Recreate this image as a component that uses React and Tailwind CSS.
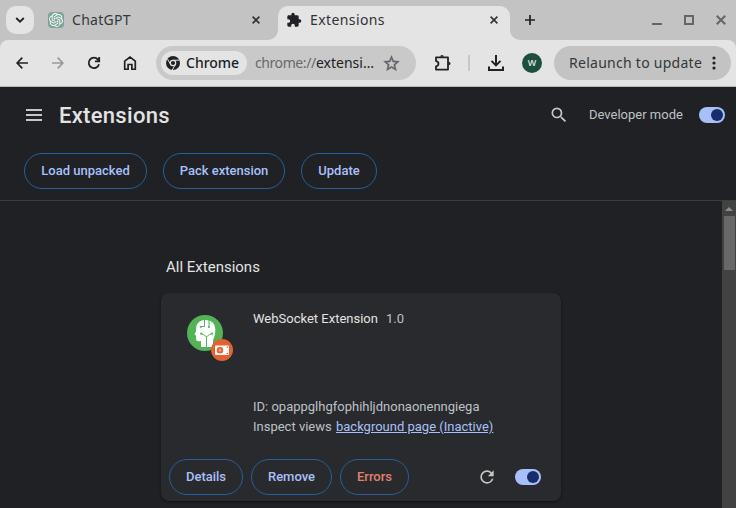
import React from "react";

function Label({ children, className }) {
  return (
    <span className={`block shrink-0 whitespace-nowrap font-['Noto_Sans','Open_Sans',sans-serif] text-[14px] leading-6 ${className}`}>
      {children}
    </span>
  );
}

function Cross({ className }) {
  return (
    <svg viewBox="0 0 8 8" className={className}>
      <path d="M0.6 0.6 7.4 7.4M7.4 0.6 0.6 7.4" stroke="currentColor" strokeWidth="1.6" fill="none" />
    </svg>
  );
}

function OpenAiMark() {
  return (
    <svg viewBox="0 0 24 24" className="h-3.5 w-3.5 text-white" fill="currentColor">
      <path d="M22.28 9.82a5.98 5.98 0 0 0-.52-4.91 6.05 6.05 0 0 0-6.51-2.9A6.07 6.07 0 0 0 4.98 4.18a5.98 5.98 0 0 0-4 2.9 6.05 6.05 0 0 0 .74 7.1 5.98 5.98 0 0 0 .51 4.91 6.05 6.05 0 0 0 6.51 2.9A5.98 5.98 0 0 0 13.26 24a6.06 6.06 0 0 0 5.77-4.21 5.99 5.99 0 0 0 4-2.9 6.06 6.06 0 0 0-.75-7.07zm-9.02 12.61a4.48 4.48 0 0 1-2.88-1.04l.14-.08 4.78-2.76a.8.8 0 0 0 .39-.68v-6.74l2.02 1.17a.07.07 0 0 1 .04.05v5.58a4.5 4.5 0 0 1-4.49 4.5zM3.6 18.3a4.47 4.47 0 0 1-.54-3.01l.14.08 4.78 2.76a.77.77 0 0 0 .78 0l5.84-3.37v2.33a.08.08 0 0 1-.03.06L9.74 19.95a4.5 4.5 0 0 1-6.14-1.65zM2.34 7.9a4.49 4.49 0 0 1 2.37-1.98V11.6a.77.77 0 0 0 .39.68l5.81 3.35-2.02 1.17a.08.08 0 0 1-.07 0l-4.83-2.79A4.5 4.5 0 0 1 2.34 7.87zm16.6 3.85-5.84-3.38L15.12 7.2a.08.08 0 0 1 .07 0l4.83 2.79a4.49 4.49 0 0 1-.68 8.1v-5.67a.79.79 0 0 0-.4-.67zm2.01-3.02-.14-.09-4.77-2.78a.78.78 0 0 0-.79 0L9.41 9.23V6.9a.07.07 0 0 1 .03-.06l4.83-2.79a4.5 4.5 0 0 1 6.68 4.66zM8.31 12.86l-2.02-1.16a.08.08 0 0 1-.04-.06V6.07a4.5 4.5 0 0 1 7.38-3.45l-.14.08-4.78 2.76a.8.8 0 0 0-.39.68zm1.1-2.36 2.6-1.5 2.6 1.5v3l-2.6 1.5-2.6-1.5z" />
    </svg>
  );
}

function TabStrip() {
  return (
    <div className="flex h-10 bg-[#c3c3c3]">
      <div className="ml-1.5 mt-1.5 flex h-7 w-7 items-center justify-center rounded-[10px] bg-[#e4e4e4]">
        <svg viewBox="0 0 10 6" className="h-1.5 w-2.5 text-[#202124]">
          <path d="M1.2 1 5 4.7 8.8 1" stroke="currentColor" strokeWidth="1.8" fill="none" />
        </svg>
      </div>
      <div className="ml-3.5 flex h-10 w-[220px] items-center">
        <span className="flex h-4 w-4 items-center justify-center rounded-sm bg-[#7ba696]">
          <OpenAiMark />
        </span>
        <Label className="ml-2 w-[59px] tracking-[0.3px] text-[#35373a]">ChatGPT</Label>
        <Cross className="ml-[121px] h-2 w-2 text-[#303236]" />
      </div>
      <svg viewBox="0 0 10 10" className="h-2.5 w-2.5 self-end text-[#e4e4e4]">
        <path d="M10 0v10H0A10 10 0 0 0 10 0z" fill="currentColor" />
      </svg>
      <div className="mt-1.5 flex h-[34px] w-[232px] items-center rounded-t-[10px] bg-[#e4e4e4] pb-1.5">
        <svg viewBox="0 0 24 24" className="ml-2 h-4 w-4 text-[#202124]" fill="currentColor">
          <path d="M20.5 11H19V7c0-1.1-.9-2-2-2h-4V3.5a2.5 2.5 0 0 0-5 0V5H4c-1.1 0-1.99.9-1.99 2v3.8H3.5c1.49 0 2.7 1.21 2.7 2.7s-1.21 2.7-2.7 2.7H2V20c0 1.1.9 2 2 2h3.8v-1.5c0-1.49 1.21-2.7 2.7-2.7s2.7 1.21 2.7 2.7V22H17c1.1 0 2-.9 2-2v-4h1.5a2.5 2.5 0 0 0 0-5z" />
        </svg>
        <Label className="ml-2 w-[75px] tracking-[0.4px] text-[#303236]">Extensions</Label>
        <Cross className="ml-[105px] h-2 w-2 text-[#303236]" />
      </div>
      <svg viewBox="0 0 10 10" className="h-2.5 w-2.5 self-end text-[#e4e4e4]">
        <path d="M0 0v10h10A10 10 0 0 1 0 0z" fill="currentColor" />
      </svg>
      <svg viewBox="0 0 10 10" className="ml-[5px] mt-[15px] h-2.5 w-2.5 text-[#202124]">
        <path d="M5 0v10M0 5h10" stroke="currentColor" strokeWidth="1.7" />
      </svg>
      <div className="ml-auto flex h-10 items-center gap-[22px] pr-[10px] text-[#63666a]">
        <span className="mt-[7px] h-0.5 w-2.5 bg-current" />
        <span className="h-2.5 w-2.5 border-2 border-current" />
        <Cross className="h-2.5 w-2.5" />
      </div>
    </div>
  );
}

function ChromeMark() {
  return (
    <svg viewBox="0 0 14 14" className="h-3.5 w-3.5 shrink-0">
      <circle cx="7" cy="7" r="7" fill="#202124" />
      <circle cx="7" cy="7" r="2.7" fill="none" stroke="#e4e4e4" strokeWidth="1.2" />
      <path d="M7 4.2H13.4M4.6 8.4 1.4 2.9M9.4 8.4 6.3 14" stroke="#e4e4e4" strokeWidth="1" />
    </svg>
  );
}

function Toolbar() {
  return (
    <div className="bg-[#c3c3c3]">
      <div className="flex h-[46px] items-center rounded-t-lg bg-[#e4e4e4] text-[#202124]">
        <svg viewBox="0 0 12 12" className="ml-4 h-3 w-3" fill="none" stroke="currentColor" strokeWidth="1.7">
          <path d="M12 6H1.3M6.3.7 1.1 6l5.2 5.3" />
        </svg>
        <svg viewBox="0 0 12 12" className="ml-6 h-3 w-3 text-[#999]" fill="none" stroke="currentColor" strokeWidth="1.7">
          <path d="M0 6h10.7M5.7.7 10.9 6l-5.2 5.3" />
        </svg>
        <svg viewBox="0 0 14 14" className="ml-[23px] h-3.5 w-3.5" fill="none" stroke="currentColor" strokeWidth="1.8">
          <path d="M12 8.2A5.2 5.2 0 1 1 11 3.6L12 4.8M12.2 1v4.3H8" />
        </svg>
        <svg viewBox="0 0 14 14" className="ml-[22px] h-3.5 w-3.5" fill="none" stroke="currentColor" strokeWidth="1.7">
          <path d="M1.7 5.2 7 1.1l5.300 4.100v8.100H8.900V8.500H5.100v4.800H1.700z" />
        </svg>
        <div className="ml-[19px] flex h-[34px] w-[260px] items-center rounded-full bg-[#c9c9c9] pl-[5px]">
          <div className="flex h-6 w-[86px] items-center rounded-full bg-[#e4e4e4] pl-[5px]">
            <ChromeMark />
            <Label className="ml-1.5 font-medium text-[#202124]">Chrome</Label>
          </div>
          <Label className="ml-2 flex w-[120px] text-[#202124]">
            <span className="inline-block w-[61px] tracking-[-0.42px] text-[#66696d]">chrome://</span>
            <span>extensi…</span>
          </Label>
          <svg viewBox="0 0 24 24" className="ml-[7px] h-[19px] w-[19px] shrink-0 text-[#5f6368]" fill="currentColor" stroke="currentColor" strokeWidth="0.5">
            <path d="m22 9.240-7.190-.620L12 2 9.190 8.630 2 9.240l5.460 4.730L5.820 21 12 17.270 18.180 21l-1.630-7.030L22 9.240zM12 15.400l-3.760 2.270 1-4.280-3.320-2.880 4.380-.380L12 6.100l1.710 4.040 4.380.380-3.320 2.880 1 4.280L12 15.400z" />
          </svg>
        </div>
        <svg viewBox="0 0 18 18" className="ml-[17px] h-[18px] w-[18px]">
          <path d="M3 3.400h12v12.200H3v-3.300c3.300-.500 3.300-4.700 0-5.200z" fill="none" stroke="currentColor" strokeWidth="1.800" strokeLinejoin="round" />
          <path d="M7.200 2.800a1.800 1.800 0 0 1 3.600 0zM15.700 7.700a1.800 1.800 0 0 1 0 3.600z" fill="currentColor" />
        </svg>
        <span className="ml-[17px] h-4 w-0.5 bg-[#c7c7c7]" />
        <svg viewBox="0 0 16 16" className="ml-[18px] h-4 w-4" fill="none" stroke="currentColor" strokeWidth="2">
          <path d="M8 0v10M3.500 5.900 8 10.400l4.500-4.500M1 11.500V15h14v-3.500" />
        </svg>
        <span className="ml-[18px] flex h-5 w-5 items-center justify-center rounded-full bg-[#1c4f40] font-['Open_Sans',sans-serif] text-[9px] font-semibold text-[#e4e4e4]">W</span>
        <div className="ml-3 flex h-[34px] w-[177px] items-center rounded-full bg-[#c3c3c3] pl-[15px]">
          <Label className="w-[133px] tracking-[0.27px] text-[#35373a]">Relaunch to update</Label>
          <svg viewBox="0 0 4 14" className="ml-[10px] h-3.5 w-1" fill="#202124">
            <circle cx="2" cy="2" r="1.600" />
            <circle cx="2" cy="7" r="1.600" />
            <circle cx="2" cy="12" r="1.600" />
          </svg>
        </div>
      </div>
      <div className="h-px bg-[#b8b9b9]" />
    </div>
  );
}

function Toggle({ className = "" }) {
  return (
    <span className={`flex h-4 w-[26px] shrink-0 items-center justify-end rounded-full bg-[#a8c0fa] pr-0.5 ${className}`}>
      <span className="h-3 w-3 rounded-full bg-[#172c6c]" />
    </span>
  );
}

function Pill({ children, className }) {
  return (
    <button className={`flex h-9 shrink-0 items-center justify-center rounded-full border border-[#285f9c] text-[13px] font-medium ${className}`}>
      {children}
    </button>
  );
}

function ExtensionIcon() {
  return (
    <svg viewBox="0 0 46 46" className="h-[46px] w-[46px] shrink-0">
      <circle cx="18" cy="18" r="18" fill="#53b356" />
      <path d="M18.500 5C13 5 9.200 8.300 9.200 13.200c0 1.800-.300 3-.900 4.500l-.700 1.900 1.500.800v3.500c0 1.800.900 2.400 2.600 2.300l2.300-.100V32h12v-7.300c1.600-2.200 2.300-5.500 2.300-10C28.300 8.600 24.500 5 18.500 5z" fill="#fff" />
      <path d="M19.500 32V21.500M14.500 19l2 .5 3 2.300 3-2.300 2-.5M17.500 5v6.500h-3M22 5v6.500" fill="none" stroke="#53b356" strokeWidth="1" />
      <g fill="#53b356">
        <circle cx="13.800" cy="11.800" r="1.100" />
        <circle cx="22" cy="12" r="1.100" />
        <circle cx="14.200" cy="18.700" r="1.100" />
        <circle cx="25" cy="18.700" r="1.100" />
      </g>
      <circle cx="35" cy="35" r="11" fill="#e3622f" />
      <rect x="28" y="30.500" width="14" height="9.500" rx="1" fill="#fff" />
      <circle cx="33" cy="35.200" r="2.300" fill="#f3b79f" stroke="#e3622f" strokeWidth="2" />
      <g fill="#e3622f">
        <circle cx="40.400" cy="32.200" r=".7" />
        <circle cx="40.400" cy="38.400" r=".7" />
      </g>
    </svg>
  );
}

function ExtensionCard() {
  return (
    <div className="ml-[161px] mt-4 flex h-[208px] w-[400px] flex-col rounded-lg bg-[#292a2d] shadow-[0_1px_3px_rgba(0,0,0,0.5)]">
      <div className="flex pl-[26px] pt-4">
        <div className="pt-1.5">
          <ExtensionIcon />
        </div>
        <div className="ml-5 text-[13px] leading-5 text-[#bdc1c6]">
          <div className="flex h-[88px] gap-2">
            <span className="text-[#e3e3e3]">WebSocket Extension</span>
            <span>1.0</span>
          </div>
          <div>ID: opappglhgfophihljdnonaonenngiega</div>
          <div>
            Inspect views <a className="ml-px text-[#a8c0fa] underline">background page (Inactive)</a>
          </div>
        </div>
      </div>
      <div className="mb-1.5 mt-auto flex items-center gap-2 pl-2 text-[#a8c0fa]">
        <Pill className="w-[74px]">Details</Pill>
        <Pill className="w-[81px]">Remove</Pill>
        <Pill className="w-[69px] text-[#e0806f]">Errors</Pill>
        <svg viewBox="0 0 24 24" className="ml-[60px] h-5 w-5 text-[#c7c7c7]" fill="currentColor">
          <path d="M17.650 6.350A7.958 7.958 0 0 0 12 4a8 8 0 1 0 7.730 10h-2.080A5.990 5.990 0 0 1 12 18c-3.310 0-6-2.690-6-6s2.690-6 6-6c1.660 0 3.140.690 4.220 1.780L13 11h7V4l-2.350 2.350z" />
        </svg>
        <Toggle className="ml-[10px]" />
      </div>
    </div>
  );
}

export default function App() {
  return (
    <div className="flex h-[508px] w-[736px] flex-col overflow-hidden bg-[#202124]">
      <TabStrip />
      <Toolbar />
      <div className="flex min-h-0 flex-1 flex-col font-[Roboto,sans-serif] text-[#e3e3e3]">
        <header className="flex h-14 shrink-0 items-center pr-[11px]">
          <span className="ml-[26px] flex w-4 flex-col gap-[3px]">
            <span className="h-0.5 bg-[#c7c7c7]" />
            <span className="h-0.5 bg-[#c7c7c7]" />
            <span className="h-0.5 bg-[#c7c7c7]" />
          </span>
          <h1 className="ml-[17px] text-[22px] font-medium tracking-[0.3px]">Extensions</h1>
          <svg viewBox="0 0 24 24" className="ml-auto h-5 w-5 text-[#c7c7c7]" fill="currentColor">
            <path d="M15.500 14h-.790l-.280-.270A6.471 6.471 0 0 0 16 9.500 6.500 6.500 0 1 0 9.500 16c1.610 0 3.090-.590 4.230-1.570l.270.280v.790l5 4.990L20.490 19l-4.990-5zm-6 0C7.010 14 5 11.990 5 9.500S7.010 5 9.500 5 14 7.010 14 9.500 11.990 14 9.500 14z" />
          </svg>
          <span className="ml-5 w-[94px] whitespace-nowrap text-[13px] text-[#bdc1c6]">Developer mode</span>
          <Toggle className="ml-4" />
        </header>
        <div className="flex h-[58px] shrink-0 gap-4 border-b border-[#3c3d3f] pl-6 pt-[10px] text-[#a8c0fa]">
          <Pill className="w-[123px]">Load unpacked</Pill>
          <Pill className="w-[122px]">Pack extension</Pill>
          <Pill className="w-[76px]">Update</Pill>
        </div>
        <div className="flex min-h-0 flex-1">
          <main className="min-w-0 flex-1 overflow-hidden">
            <h2 className="ml-[166px] mt-[56px] text-[15px] leading-5">All Extensions</h2>
            <ExtensionCard />
          </main>
          <div className="flex w-3.5 flex-col items-center bg-[#424242]">
            <svg viewBox="0 0 8 4" className="mt-1.5 h-1 w-2" fill="#8b8b8b">
              <path d="M4 0 8 4H0z" />
            </svg>
            <span className="mt-[5px] h-[54px] w-[11px] bg-[#686868]" />
          </div>
        </div>
      </div>
    </div>
  );
}
